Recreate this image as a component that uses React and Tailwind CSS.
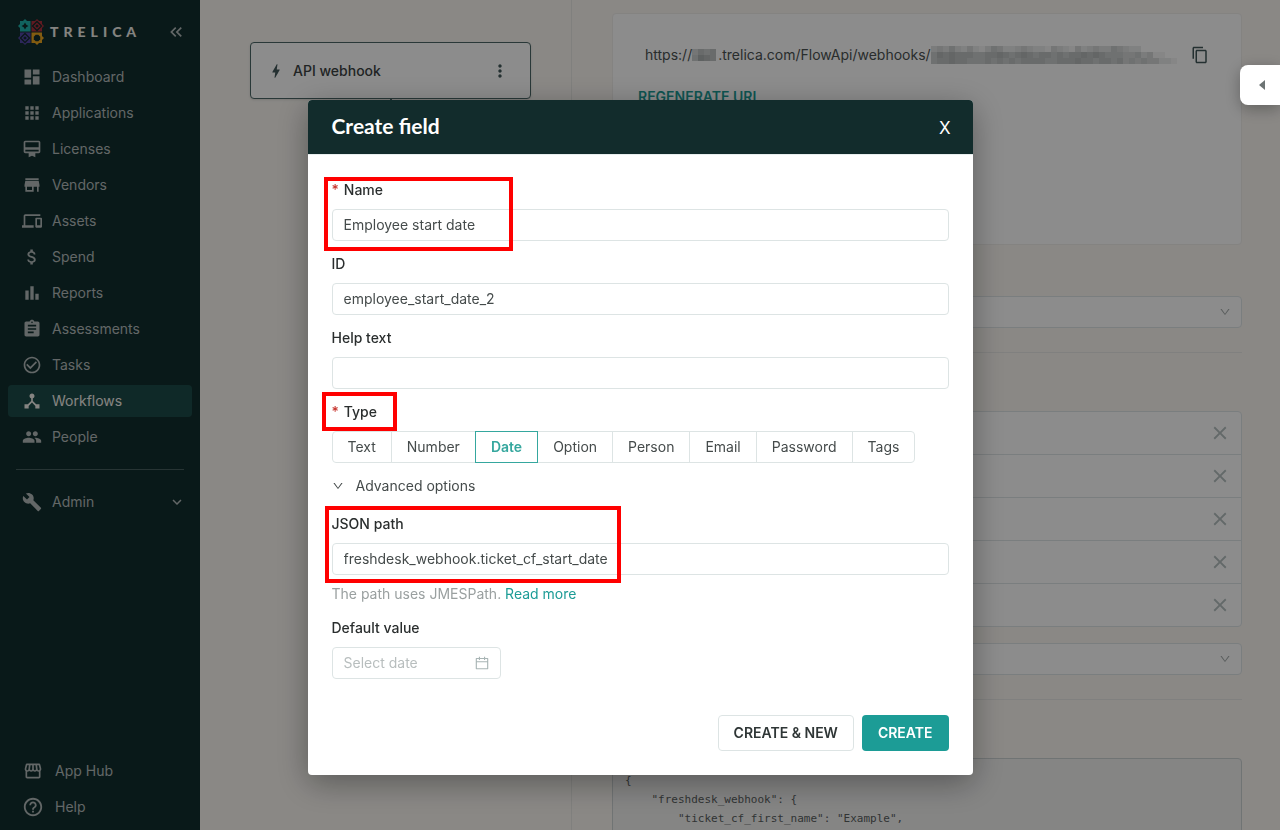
import { useState } from 'react';
import clsx from 'clsx';
import {
  MdDashboard, MdApps, MdCardMembership, MdStore, MdDevices, MdAttachMoney, MdBarChart, MdAssignment,
  MdCheckCircleOutline, MdDeviceHub, MdPeople, MdBuild, MdExpandMore, MdOutlineStorefront, MdHelpOutline,
  MdKeyboardDoubleArrowLeft, MdBolt, MdMoreVert, MdContentCopy, MdClose
} from 'react-icons/md';
import { AiOutlineDown, AiOutlineCalendar } from 'react-icons/ai';

const navItems = [
  { label: 'Dashboard', icon: MdDashboard },
  { label: 'Applications', icon: MdApps },
  { label: 'Licenses', icon: MdCardMembership },
  { label: 'Vendors', icon: MdStore },
  { label: 'Assets', icon: MdDevices },
  { label: 'Spend', icon: MdAttachMoney },
  { label: 'Reports', icon: MdBarChart },
  { label: 'Assessments', icon: MdAssignment },
  { label: 'Tasks', icon: MdCheckCircleOutline },
  { label: 'Workflows', icon: MdDeviceHub },
  { label: 'People', icon: MdPeople },
];

const fieldTypes = ['Text', 'Number', 'Date', 'Option', 'Person', 'Email', 'Password', 'Tags'];

const samplePayload = `{
    "freshdesk_webhook": {
        "ticket_cf_first_name": "Example",`;

// Darkness of each cell, 0-9, one string per row
const hostMask = ['4656', '5876'];
const tokenMask = [
  '34353242135422343221432142343354322000000',
  '57676665566765676566565667676555445341100',
  '56676655565656566665566676656656454544221',
];

function LogoMark() {
  return (
    <svg viewBox="0 0 26 26" className="size-[26px]" aria-hidden="true">
      <path d="M2 2h3l2-2 2 2h3.500v10.500H2V9L0 7l2-2z" fill="#20b5ae" />
      <path d="M7 3.500l1.300 2.200L10.500 7 8.300 8.300 7 10.500 5.700 8.300 3.500 7l2.200-1.300z" fill="#122c2c" />

      <path d="M13.500 2H17l2-2 2 2h3v3l2 2-2 2v3.500H13.500z" fill="#b0303c" />
      <path d="M19 2.500L23.500 7 19 11.500 14.500 7z" fill="none" stroke="#122c2c" strokeWidth="1.300" />
      <path d="M19 5.200L20.800 7 19 8.800 17.200 7z" fill="#122c2c" />

      <path d="M2 13.500h10.500V24H9l-2 2-2-2H2v-3l-2-2 2-2z" fill="#5347a6" />
      <path d="M7 14.500L11.500 19 7 23.500 2.500 19z" fill="none" stroke="#122c2c" strokeWidth="1.300" />
      <path d="M7 17.200L8.800 19 7 20.800 5.200 19z" fill="#122c2c" />

      <path d="M13.500 13.500H24V17l2 2-2 2v3h-3l-2 2-2-2h-3.500z" fill="#efa81f" />
      <path d="M17.700 15.800h2.600l1.900 1.900v2.600l-1.900 1.900h-2.600l-1.900-1.900v-2.600z" fill="#122c2c" />
    </svg>
  );
}

function Mosaic({ rows }) {
  const cols = rows[0].length;
  return (
    <svg
      width={cols * 6}
      height={rows.length * 6}
      shapeRendering="crispEdges"
      className="shrink-0"
      aria-hidden="true"
    >
      {rows.map((row, y) =>
        row.split('').map((v, x) => (
          <rect key={`${x}-${y}`} x={x * 6} y={y * 6} width="6" height="6" fill="#2f3b3b" opacity={v * 0.05} />
        ))
      )}
    </svg>
  );
}

function Sidebar() {
  return (
    <aside className="w-[200px] h-screen shrink-0 bg-[#122f2f] text-[#b4bcbc] flex flex-col text-[14px] leading-[22px]">
      <div className="h-[61px] pl-[18px] pr-3.5 pt-0.5 flex items-center">
        <LogoMark />
        <span className="ml-1.5 font-['Lato'] font-black text-[14px] tracking-[5px] text-[#f0eeea]">TRELICA</span>
        <button aria-label="Collapse menu" className="ml-auto">
          <MdKeyboardDoubleArrowLeft className="size-5" />
        </button>
      </div>

      <nav className="px-2 space-y-1">
        {navItems.map(({ label, icon: Icon }) => (
          <a
            key={label}
            href="#"
            className={clsx(
              'h-8 px-3.5 flex items-center gap-2.5 rounded',
              label === 'Workflows' && 'bg-[#1d4c49] text-[#f3f1ed]'
            )}
          >
            <Icon className="size-5" />
            {label}
          </a>
        ))}
      </nav>

      <div className="mx-4 mt-4 mb-4 h-px bg-[#475f5f]" />

      <a href="#" className="mx-2 h-8 px-3.5 flex items-center gap-2.5">
        <MdBuild className="size-5" />
        Admin
        <MdExpandMore className="size-[18px] ml-auto -mr-2" />
      </a>

      <div className="mt-auto px-2 pb-[7px] space-y-1">
        <a href="#" className="h-8 pl-[15px] flex items-center gap-3">
          <MdOutlineStorefront className="size-5" />
          App Hub
        </a>
        <a href="#" className="h-8 pl-3.5 flex items-center gap-3">
          <MdHelpOutline className="size-[22px] -mr-px" />
          Help
        </a>
      </div>
    </aside>
  );
}

function PanelSelect({ label }) {
  return (
    <button
      aria-label={label}
      className="w-full h-8 pr-2.5 flex items-center justify-end bg-white border border-[#dfe5e7] rounded"
    >
      <AiOutlineDown className="size-3 text-[#a4abab]" />
    </button>
  );
}

function WorkflowPage() {
  return (
    <div className="flex flex-1 min-w-0 h-screen overflow-hidden bg-[#fbf8f3]">
      {/* Canvas */}
      <div className="w-[372px] shrink-0 border-r border-[#e9e9e5] pl-[50px] pr-10 pt-[42px] flex flex-col items-center">
        <div className="w-full h-[57px] px-5 flex items-center bg-white border border-[#4b6666] rounded shadow">
          <MdBolt className="size-[18px] -ml-1 text-[#42585a]" />
          <span className="ml-2 text-[14px] leading-[22px] font-medium text-[#3c4343]">API webhook</span>
          <button aria-label="Step options" className="ml-auto">
            <MdMoreVert className="size-5 text-[#42585a]" />
          </button>
        </div>
        <div className="w-0.5 h-10 bg-[#4b6666]" />
      </div>

      {/* Step settings */}
      <div className="flex-1 min-w-0 pl-10 pr-[38px] pt-[13px]">
        <section className="h-[232px] bg-white border border-[#f0eeeb] rounded px-[25px] pt-6">
          <div className="h-[34px] pl-[7px] pr-[7px] flex items-center text-[14px] leading-[22px] text-[#4b5252]">
            <span>https://</span>
            <Mosaic rows={hostMask} />
            <span className="ml-0.5">.trelica.com/FlowApi/webhooks/</span>
            <Mosaic rows={tokenMask} />
            <button aria-label="Copy URL" className="ml-auto">
              <MdContentCopy className="size-[18px] text-[#42585a]" />
            </button>
          </div>
          <button className="mt-3.5 text-[14px] leading-[22px] font-semibold text-[#1c9c96]">REGENERATE URL</button>
        </section>

        <div className="mt-[51px]">
          <PanelSelect label="Authentication" />
        </div>
        <div className="mt-6 h-px bg-[#e9e9e7]" />

        <ul className="mt-[58px] bg-white border border-[#dfe5e7] rounded divide-y divide-[#dfe5e7]">
          {[1, 2, 3, 4, 5].map((n) => (
            <li key={n} className="h-[43px] last:h-[42px] pr-2.5 flex items-center justify-end">
              <button aria-label={`Remove field ${n}`}>
                <MdClose className="size-[22px] text-[#b4bfbf]" />
              </button>
            </li>
          ))}
        </ul>
        <div className="mt-4">
          <PanelSelect label="Add field" />
        </div>
        <div className="mt-6 h-px bg-[#e9e9e7]" />

        <pre className="mt-[58px] h-40 pl-3 pt-3 bg-[#f2f2f1] border border-[#cdd3d4] rounded font-['DejaVu_Sans_Mono',monospace] text-[11px] leading-[19px] text-[#5a5f5f]">
          {samplePayload}
        </pre>
      </div>
    </div>
  );
}

function Field({ id, label, required, children }) {
  return (
    <div className="relative mb-3">
      <label htmlFor={id} className="flex items-center gap-[5px] mb-2 text-[14px] leading-[22px] font-medium text-[#2a2e2e]">
        {required && <span className="text-[#c8362f]">*</span>}
        {label}
      </label>
      {children}
    </div>
  );
}

const inputClass =
  'block w-full h-8 px-[11px] pb-0.5 text-[14px] leading-[22px] text-[#454b4b] bg-white border border-[#dde4e4] rounded outline-none placeholder:text-[#b8bebe]';

function CreateFieldDialog() {
  const [type, setType] = useState('Date');
  const [name, setName] = useState('Employee start date');
  const [fieldId, setFieldId] = useState('employee_start_date_2');
  const [help, setHelp] = useState('');
  const [path, setPath] = useState('freshdesk_webhook.ticket_cf_start_date');

  return (
    <div
      role="dialog"
      aria-labelledby="dialog-title"
      className="w-[665px] rounded bg-white shadow-[0_8px_32px_rgba(0,0,0,0.35)]"
    >
      <header className="h-[55px] pl-6 pr-[22px] flex items-center justify-between bg-[#122c2c] border-b border-[#e8eeee] rounded-t text-white">
        <h2 id="dialog-title" className="font-['Lato'] font-bold text-[21px] leading-7 pb-0.5">Create field</h2>
        <button aria-label="Close" className="text-[17px] leading-6 pt-0.5">X</button>
      </header>

      <form className="px-6 pt-6 pb-6" onSubmit={(e) => e.preventDefault()}>
        <Field id="name" label="Name" required>
          <input id="name" className={inputClass} value={name} onChange={(e) => setName(e.target.value)} />
          <div className="absolute -top-0.5 -left-2 w-[189px] h-[74px] border-4 border-[#ff0000] pointer-events-none" />
        </Field>

        <Field id="field-id" label="ID">
          <input id="field-id" className={inputClass} value={fieldId} onChange={(e) => setFieldId(e.target.value)} />
        </Field>

        <Field id="help" label="Help text">
          <input id="help" className={inputClass} value={help} onChange={(e) => setHelp(e.target.value)} />
        </Field>

        <Field label="Type" required>
          <div role="radiogroup" aria-label="Type" className="flex">
            {fieldTypes.map((item) => (
              <label
                key={item}
                className={clsx(
                  'h-8 px-[15px] flex items-center border text-[14px] leading-[22px] cursor-pointer -ml-px first:ml-0 first:rounded-l last:rounded-r',
                  type === item
                    ? 'relative border-[#35a79e] text-[#35a79e] font-semibold'
                    : 'border-[#dde4e4] text-[#454b4b]'
                )}
              >
                <input
                  type="radio"
                  name="type"
                  className="sr-only"
                  checked={type === item}
                  onChange={() => setType(item)}
                />
                {item}
              </label>
            ))}
          </div>
          <div className="absolute -top-[9px] -left-2.5 w-[75px] h-[39px] border-4 border-[#ff0000] pointer-events-none" />
        </Field>

        <button type="button" className="flex items-center gap-3 mb-4 text-[14px] leading-[22px] text-[#454b4b]">
          <AiOutlineDown className="size-3" />
          Advanced options
        </button>

        <Field id="path" label="JSON path">
          <input id="path" className={inputClass} value={path} onChange={(e) => setPath(e.target.value)} />
          <p className="mt-2 text-[14px] leading-[22px] text-[#9aa0a0]">
            The path uses JMESPath. <a href="#" className="text-[#1c9c96]">Read more</a>
          </p>
          <div className="absolute -top-[7px] -left-[7px] w-[296px] h-[77px] border-4 border-[#ff0000] pointer-events-none" />
        </Field>

        <Field id="default" label="Default value">
          <div className="relative w-[169px]">
            <input id="default" className={inputClass} placeholder="Select date" />
            <AiOutlineCalendar className="absolute right-[11px] top-2 size-4 text-[#a9b5b5]" />
          </div>
        </Field>

        <footer className="mt-9 flex justify-end gap-2 text-[14px] leading-[22px] font-semibold">
          <button type="button" className="h-9 px-[15px] border border-[#dde4e4] rounded text-[#2f3636]">
            CREATE &amp; NEW
          </button>
          <button type="submit" className="h-9 px-4 rounded bg-[#1c9c96] text-white">CREATE</button>
        </footer>
      </form>
    </div>
  );
}

export default function App() {
  return (
    <div className="flex h-screen overflow-hidden font-['Inter',sans-serif]">
      <Sidebar />
      <WorkflowPage />

      {/* Overlay */}
      <div className="fixed inset-0 bg-black/45 flex justify-center items-start pt-[100px]">
        <CreateFieldDialog />
      </div>

      {/* Drawer handle */}
      <button
        aria-label="Open drawer"
        className="fixed right-0 top-[65px] w-10 h-10 flex items-center justify-center bg-white rounded-l-lg shadow-[0_4px_16px_rgba(0,0,0,0.3)]"
      >
        <svg viewBox="0 0 6 10" className="w-1.5 h-2.5 ml-1" fill="#6d7474" aria-hidden="true">
          <path d="M6 0v10L0 5z" />
        </svg>
      </button>
    </div>
  );
}
